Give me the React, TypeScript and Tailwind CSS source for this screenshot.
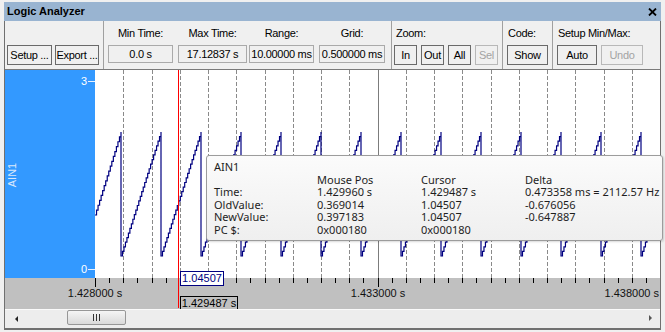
import clsx from "clsx";

const HI = 62;
const LO = 186;

function stairs(x0: number, y0: number, x1: number, y1: number) {
  const n = Math.max(1, Math.round((x1 - x0) / 1.5));
  let d = "";
  for (let i = 1; i <= n; i++) {
    const x = x0 + ((x1 - x0) * i) / n;
    const y = y0 + ((y1 - y0) * i) / n;
    d += ` H${x.toFixed(2)} V${y.toFixed(2)}`;
  }
  return d;
}

function wavePath() {
  let d = "M0,145" + stairs(0, 145, 26, HI);
  for (let k = 0; k < 14; k++) {
    const p = 26 + 40 * k;
    d += ` V${LO}` + stairs(p, LO, p + 40, HI);
  }
  return d;
}

const WAVE = wavePath();
const GRID = Array.from({ length: 19 }, (_, i) => i + 1);
const TICKS = Array.from({ length: 41 }, (_, i) => i);

function Btn({
  children,
  className,
  disabled,
}: {
  children: React.ReactNode;
  className?: string;
  disabled?: boolean;
}) {
  return (
    <button
      className={clsx(
        "h-[20px] border bg-[#f0f0f0] text-[11px] leading-none whitespace-nowrap",
        disabled ? "border-[#b8b8b8] text-[#a3a3a3]" : "border-[#6a6a6a] text-black",
        className
      )}
    >
      {children}
    </button>
  );
}

function Field({ label, value, className }: { label: string; value: string; className: string }) {
  return (
    <div className={clsx("flex flex-col items-center", className)}>
      <span className="h-[13px] leading-[13px]">{label}</span>
      <div className="mt-[5px] flex h-[18px] w-full items-center justify-center border border-[#aaaaaa] whitespace-nowrap">
        {value}
      </div>
    </div>
  );
}

function Toolbar() {
  return (
    <div className="flex h-[48px] text-[11px] tracking-[-0.3px] text-black">
      <div className="flex w-[99px] gap-[3px] border-r border-[#a0a0a0] pl-[2px] pt-[24px]">
        <Btn className="w-[45px]">Setup ...</Btn>
        <Btn className="w-[44px]">Export ...</Btn>
      </div>
      <div className="flex w-[288px] border-r border-[#a0a0a0] pl-[4px] pt-[6px]">
        <Field label="Min Time:" value="0.0 s" className="w-[65px]" />
        <Field label="Max Time:" value="17.12837 s" className="ml-[5px] w-[69px]" />
        <Field label="Range:" value="10.00000 ms" className="ml-[2px] w-[65px]" />
        <Field label="Grid:" value="0.500000 ms" className="ml-[5px] w-[66px]" />
      </div>
      <div className="flex w-[111px] flex-col border-r border-[#a0a0a0] pt-[6px]">
        <span className="h-[13px] pl-[4px] leading-[13px]">Zoom:</span>
        <div className="mt-[5px] flex gap-[4px] pl-[2px]">
          <Btn className="w-[23px]">In</Btn>
          <Btn className="w-[23px]">Out</Btn>
          <Btn className="w-[23px]">All</Btn>
          <Btn className="w-[23px]" disabled>
            Sel
          </Btn>
        </div>
      </div>
      <div className="flex w-[50px] flex-col border-r border-[#a0a0a0] pt-[6px]">
        <span className="h-[13px] pl-[5px] leading-[13px]">Code:</span>
        <div className="mt-[5px] flex pl-[4px]">
          <Btn className="w-[41px]">Show</Btn>
        </div>
      </div>
      <div className="flex flex-1 flex-col pt-[6px]">
        <span className="h-[13px] pl-[5px] leading-[13px]">Setup Min/Max:</span>
        <div className="mt-[5px] flex gap-[4px] pl-[4px]">
          <Btn className="w-[40px]">Auto</Btn>
          <Btn className="w-[42px]" disabled>
            Undo
          </Btn>
        </div>
      </div>
    </div>
  );
}

function Plot() {
  return (
    <div className="relative border-t border-[#7a7a7a]">
      <div className="flex h-[208px]">
        <div className="w-[90px] bg-[#3399ff]">
          <svg width="90" height="208" className="block">
            <text
              x="11"
              y="105"
              transform="rotate(-90 11 105)"
              textAnchor="middle"
              fill="#dbe8fb"
              fontSize="11"
              fontFamily="Liberation Sans, Arial, sans-serif"
            >
              AIN1
            </text>
            <line x1="83" y1="11.5" x2="90" y2="11.5" stroke="#e8f1ff" />
            <line x1="83" y1="199.5" x2="90" y2="199.5" stroke="#e8f1ff" />
            <text x="82" y="15" textAnchor="end" fill="#ffffff" fontSize="11" fontFamily="Liberation Sans, Arial, sans-serif">
              3
            </text>
            <text x="82" y="203" textAnchor="end" fill="#ffffff" fontSize="11" fontFamily="Liberation Sans, Arial, sans-serif">
              0
            </text>
          </svg>
        </div>
        <div className="flex-1 bg-white">
          <svg width="565" height="208" className="block">
            {GRID.map((k) => {
              const x = Math.round(28.25 * k) + 0.5;
              return k === 10 ? (
                <line key={k} x1={x} y1="0" x2={x} y2="208" stroke="#7c7c7c" />
              ) : (
                <line key={k} x1={x} y1="0" x2={x} y2="208" stroke="#8a8a8a" strokeDasharray="4 2" />
              );
            })}
            <path d={WAVE} fill="none" stroke="#000080" strokeWidth="1.2" />
            <line x1="83.5" y1="0" x2="83.5" y2="208" stroke="#ff0000" />
          </svg>
        </div>
      </div>
      <div className="h-[31px] bg-[#c0c0c0]">
        <svg width="655" height="31" className="block">
          {TICKS.map((j) => {
            const x = Math.round(90 + 14.125 * j) + 0.5;
            const major = j % 20 === 0;
            return <line key={j} x1={x} y1="0" x2={x} y2={major ? 9 : 5} stroke="#000" />;
          })}
          <g fill="#111" fontSize="11" fontFamily="Liberation Sans, Arial, sans-serif">
            <text x="90" y="19" textAnchor="middle">
              1.428000 s
            </text>
            <text x="373" y="19" textAnchor="middle">
              1.433000 s
            </text>
            <text x="654" y="19" textAnchor="end">
              1.438000 s
            </text>
          </g>
          <line x1="173.5" y1="0" x2="173.5" y2="30" stroke="#ff0000" />
        </svg>
      </div>

      <div className="absolute left-[175px] top-[201px] flex h-[15px] w-[44px] items-center justify-center border border-[#000080] bg-white text-[11px] text-[#000080]">
        1.04507
      </div>
      <div className="absolute left-[175px] top-[226px] flex h-[14px] w-[58px] items-center justify-center border border-black bg-[#c0c0c0] text-[11px] text-black">
        1.429487 s
      </div>

      <div className="absolute left-[201px] top-[85px] w-[457px] rounded-[3px] border border-[#9c9c9c] bg-gradient-to-b from-[#fbfbfb] to-[#efefef] pb-[4px] pl-[7px] pt-[5px] font-['Noto_Sans',sans-serif] text-[11px] leading-[12.5px] text-[#1e1e1e] shadow-[1px_1px_2px_rgba(0,0,0,0.15)]">
        <div>AIN1</div>
        <div className="grid grid-cols-[103px_104px_104px_1fr] whitespace-nowrap">
          <span></span>
          <span>Mouse Pos</span>
          <span>Cursor</span>
          <span>Delta</span>
          <span>Time:</span>
          <span>1.429960 s</span>
          <span>1.429487 s</span>
          <span>0.473358 ms = 2112.57 Hz</span>
          <span>OldValue:</span>
          <span>0.369014</span>
          <span>1.04507</span>
          <span>-0.676056</span>
          <span>NewValue:</span>
          <span>0.397183</span>
          <span>1.04507</span>
          <span>-0.647887</span>
          <span>PC $:</span>
          <span>0x000180</span>
          <span>0x000180</span>
          <span></span>
        </div>
      </div>
    </div>
  );
}

function Scrollbar() {
  return (
    <div className="relative flex h-[19px] items-start border-t border-[#fafafa] bg-[#ededed]">
      <svg width="6" height="8" className="absolute left-[9px] top-[5px]">
        <path d="M4,1 L1,4 L4,7 Z" fill="#222" />
      </svg>
      <div className="absolute left-[62px] top-0 flex h-[15px] w-[59px] items-center justify-center rounded-[2px] border border-[#979797] bg-gradient-to-b from-[#f5f5f5] to-[#dadada]">
        <svg width="7" height="7">
          <line x1="0.5" y1="0" x2="0.5" y2="7" stroke="#333" />
          <line x1="3.5" y1="0" x2="3.5" y2="7" stroke="#333" />
          <line x1="6.5" y1="0" x2="6.5" y2="7" stroke="#333" />
        </svg>
      </div>
      <svg width="6" height="8" className="absolute left-[643px] top-[4px]">
        <path d="M1,1 L4,4 L1,7 Z" fill="#555" />
      </svg>
    </div>
  );
}

export default function App() {
  return (
    <div className="h-[332px] w-[665px] overflow-hidden bg-[#f0f0f0] px-[4px] pb-[2px] pt-[2px] font-['Liberation_Sans',Arial,sans-serif]">
      <div className="flex h-[19px] items-center justify-between bg-[#99b4d1] pl-[3px] pr-[4px]">
        <span className="text-[11px] font-bold text-black">Logic Analyzer</span>
        <svg width="9" height="8">
          <path d="M1,0.5 L8,7.5 M8,0.5 L1,7.5" stroke="#000" strokeWidth="1.8" />
        </svg>
      </div>
      <div className="border-x border-b-2 border-[#707070]">
        <Toolbar />
        <Plot />
        <Scrollbar />
      </div>
    </div>
  );
}
